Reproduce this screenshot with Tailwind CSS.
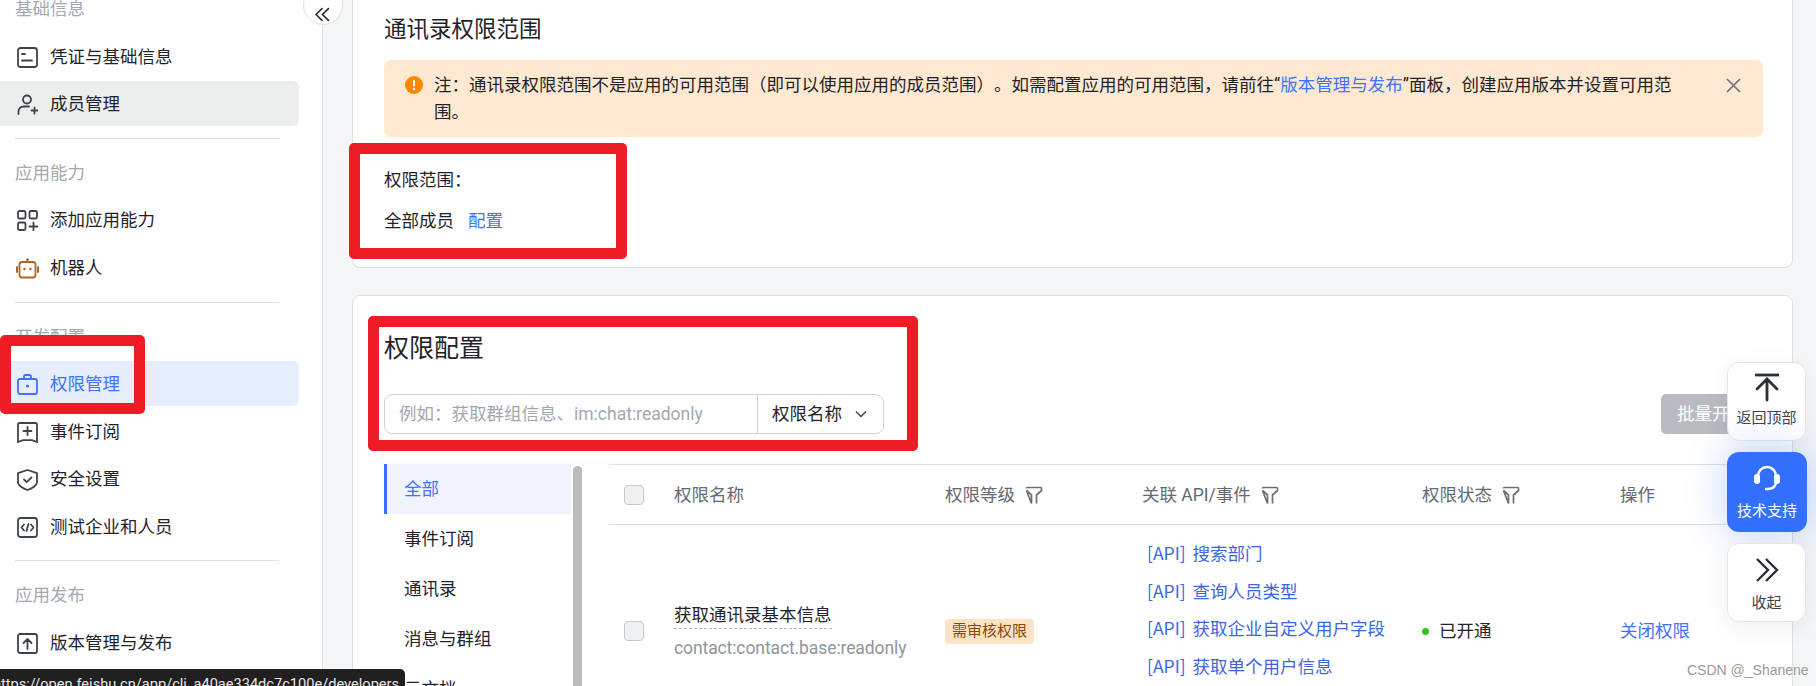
<!DOCTYPE html>
<html lang="zh-CN">
<head>
<meta charset="utf-8">
<title>权限管理</title>
<script src="https://cdn.jsdelivr.net/npm/@tailwindcss/browser@4"></script>
</head>
<body class="m-0">
<div class="relative flex h-[686px] w-[1816px] overflow-hidden bg-[#f5f6f7] font-['Roboto','Noto_Sans_CJK_SC',sans-serif] [text-spacing-trim:space-all] text-[17.5px] leading-[27px] text-[#1f2329]">

  <!-- sidebar -->
  <aside class="relative w-[323px] shrink-0 border-r border-[#dee0e3] bg-white">
    <div class="-mt-[7px] mb-[7.5px] flex h-[33px] items-center pl-[15px] text-[#a3a8af]">基础信息</div>
    <div class="flex flex-col gap-[2.5px] pr-[23px]">
      <a class="flex h-[45px] items-center gap-[12px] rounded-r-[6px] pl-[17px] pt-[2px]">
        <svg class="w-[21px] h-[21px]" viewBox="0 0 21 21" fill="none" stroke="#3f444c" stroke-width="1.8"><rect x="1" y="1" width="19" height="19" rx="2.5"/><path d="M5 7h3M5 13.5h10" stroke-linecap="round"/></svg>
        <span>凭证与基础信息</span>
      </a>
      <a class="flex h-[45px] items-center gap-[12px] rounded-r-[6px] bg-[#eceeee] pl-[17px] pt-[2px]">
        <svg class="w-[21px] h-[21px]" viewBox="0 0 21 21" fill="none" stroke="#3f444c" stroke-width="1.8" stroke-linecap="round"><circle cx="10" cy="5.5" r="4"/><path d="M1.5 20v-2.5a5 5 0 0 1 5-5H12M14.5 16.5h6M17.5 13.5v6"/></svg>
        <span>成员管理</span>
      </a>
    </div>
    <div class="ml-[15px] mt-[12px] h-px w-[264px] bg-[#dee0e3]"></div>
    <div class="flex h-[58.5px] items-center pl-[15px] pt-[10px] text-[#a3a8af]">应用能力</div>
    <div class="flex flex-col gap-[2.5px] pr-[23px]">
      <a class="flex h-[45px] items-center gap-[12px] pl-[17px] pt-[1px]">
        <svg class="w-[21px] h-[21px]" viewBox="0 0 21 21" fill="none" stroke="#3f444c" stroke-width="1.8" stroke-linecap="round"><rect x="1" y="1" width="7.5" height="7.5" rx="1.5"/><rect x="12.5" y="1" width="7.5" height="7.5" rx="1.5"/><rect x="1" y="12.5" width="7.5" height="7.5" rx="1.5"/><path d="M12.5 16.5h8M16.5 12.5v8"/></svg>
        <span>添加应用能力</span>
      </a>
      <a class="flex h-[45px] items-center gap-[11px] pl-[16px] pt-[1px]">
        <svg class="w-[23px] h-[21px]" viewBox="0 0 23 21" fill="none" stroke="#b5651d" stroke-width="1.8"><rect x="3.5" y="4" width="16" height="15.5" rx="2.5"/><path d="M11.5 1v3"/><circle cx="11.5" cy="1.5" r="1.2" fill="#b5651d" stroke="none"/><path d="M1 9v5M22 9v5" stroke-linecap="round" stroke-width="2"/><circle cx="8.5" cy="11" r="1.2" fill="#b5651d" stroke="none"/><circle cx="14.5" cy="11" r="1.2" fill="#b5651d" stroke="none"/></svg>
        <span>机器人</span>
      </a>
    </div>
    <div class="ml-[15px] mt-[12px] h-px w-[264px] bg-[#dee0e3]"></div>
    <div class="flex h-[58px] items-center pl-[15px] pt-[10px] text-[#a3a8af]">开发配置</div>
    <div class="flex flex-col gap-[2.5px] pr-[23px]">
      <a class="flex h-[45px] items-center gap-[12px] rounded-r-[6px] bg-[#e6edfd] pl-[17px] pt-[2px] text-[#3f72ff]">
        <svg class="w-[21px] h-[21px]" viewBox="0 0 21 21" fill="none" stroke="#3f72ff" stroke-width="1.8"><rect x="1" y="5" width="19" height="15" rx="2"/><path d="M7 5V2.5A1.5 1.5 0 0 1 8.5 1h4A1.5 1.5 0 0 1 14 2.5V5"/><circle cx="10.5" cy="12" r="1.6" fill="#3f72ff" stroke="none"/></svg>
        <span>权限管理</span>
      </a>
      <a class="flex h-[45px] items-center gap-[12px] pl-[17px] pt-[2px]">
        <svg class="w-[21px] h-[21px]" viewBox="0 0 21 21" fill="none" stroke="#3f444c" stroke-width="1.8" stroke-linecap="round"><path d="M1 2.5A1.5 1.5 0 0 1 2.5 1h16A1.5 1.5 0 0 1 20 2.5V20l-5-1.8H6L1 20z"/><path d="M6.5 9h8M10.5 5v8"/></svg>
        <span>事件订阅</span>
      </a>
      <a class="flex h-[45px] items-center gap-[12px] pl-[17px] pt-[2px]">
        <svg class="w-[21px] h-[22px]" viewBox="0 0 21 22" fill="none" stroke="#3f444c" stroke-width="1.8" stroke-linecap="round" stroke-linejoin="round"><path d="M10.5 1 20 4.2v9.3c0 2.600-5 6-9.500 7.500C6 19.500 1 16.100 1 13.500V4.200z"/><path d="m7 10.500 2.700 2.700L14.500 8.500"/></svg>
        <span>安全设置</span>
      </a>
      <a class="flex h-[45px] items-center gap-[12px] pl-[17px] pt-[2px]">
        <svg class="w-[21px] h-[21px]" viewBox="0 0 21 21" fill="none" stroke="#3f444c" stroke-width="1.8" stroke-linecap="round" stroke-linejoin="round"><rect x="1" y="1" width="19" height="19" rx="2.500"/><path d="M7 7.500 4.500 10.500 7 13.500M14 7.500l2.500 3-2.500 3M11.500 7l-2 7"/></svg>
        <span>测试企业和人员</span>
      </a>
    </div>
    <div class="ml-[15px] mt-[11px] h-px w-[264px] bg-[#dee0e3]"></div>
    <div class="flex h-[59px] items-center pl-[15px] pt-[10px] text-[#a3a8af]">应用发布</div>
    <div class="pr-[23px]">
      <a class="flex h-[45px] items-center gap-[12px] pl-[17px] pt-[2px]">
        <svg class="w-[21px] h-[21px]" viewBox="0 0 21 21" fill="none" stroke="#3f444c" stroke-width="1.8" stroke-linecap="round" stroke-linejoin="round"><rect x="1" y="1" width="19" height="19" rx="2"/><path d="M10.500 16V6.500M6.500 10l4-4 4 4"/></svg>
        <span>版本管理与发布</span>
      </a>
    </div>
  </aside>

  <!-- main -->
  <main class="min-w-0 flex-1 pl-[29px] pr-[23px]">
    <section class="-mt-[20px] h-[288px] rounded-[8px] border border-[#dee0e3] bg-white pl-[31px] pr-[29px] pt-[33px]">
      <h2 class="text-[22.5px] leading-[30px] font-normal text-[#1f2329]">通讯录权限范围</h2>
      <div class="mt-[16px] flex h-[77px] rounded-[7px] bg-[#fde8d1] pl-[21px] pr-[22px] pt-[12px]">
        <svg class="mt-[4px] h-[18px] w-[18px] shrink-0" viewBox="0 0 18 18"><circle cx="9" cy="9" r="9" fill="#ff8800"/><rect x="8" y="4" width="2" height="6.500" rx="1" fill="#fff"/><circle cx="9" cy="13" r="1.200" fill="#fff"/></svg>
        <p class="ml-[11px] flex-1 text-[17.5px] leading-[27px]">注：通讯录权限范围不是应用的可用范围（即可以使用应用的成员范围）。如需配置应用的可用范围，请前往“<span class="text-[#3f72ff]">版本管理与发布</span>”面板，创建应用版本并设置可用范<br>围。</p>
        <svg class="mt-[6px] h-[15px] w-[15px] shrink-0" viewBox="0 0 15 15" fill="none" stroke="#6b7078" stroke-width="1.600"><path d="m1 1 13 13M14 1 1 14"/></svg>
      </div>
      <div class="mt-[30px]">权限范围：</div>
      <div class="mt-[14px] flex gap-[14px]"><span>全部成员</span><a class="text-[#3f72ff]">配置</a></div>
    </section>

    <section class="mt-[27px] h-[500px] rounded-[8px] border border-[#dee0e3] bg-white pl-[31px] pr-[29px] pt-[36px]">
      <h2 class="text-[25px] leading-[34px] font-normal">权限配置</h2>
      <div class="mt-[28px] flex h-[40px] items-center justify-between">
        <div class="flex h-[40px] w-[500px] rounded-[8px] border border-[#d0d3d6]">
          <div class="flex w-[373px] items-center border-r border-[#d0d3d6] pl-[14px] text-[#a3a8af]">例如：获取群组信息、im:chat:readonly</div>
          <div class="flex flex-1 items-center pl-[14px]">
            <span>权限名称</span>
            <svg class="ml-[13px] h-[8px] w-[12px]" viewBox="0 0 12 8" fill="none" stroke="#3f444c" stroke-width="1.500"><path d="m1 1.500 5 5 5-5"/></svg>
          </div>
        </div>
        <button class="flex h-[40px] w-[102px] items-center justify-center rounded-[5px] bg-[#b8bbbf] text-white">批量开通</button>
      </div>

      <div class="mt-[30px] flex">
        <div class="relative w-[198px] shrink-0">
          <div class="w-[187px]">
            <div class="flex h-[50px] items-center border-l-[3px] border-[#3370ff] bg-[#f0f4ff] pl-[17px] text-[#3f72ff]">全部</div>
            <div class="flex h-[50px] items-center pl-[20px]">事件订阅</div>
            <div class="flex h-[50px] items-center pl-[20px]">通讯录</div>
            <div class="flex h-[50px] items-center pl-[20px]">消息与群组</div>
            <div class="flex h-[50px] items-center pl-[20px]">云文档</div>
          </div>
          <div class="absolute right-0 top-[2px] h-[400px] w-[9px] rounded-full bg-[#bbbbbb]"></div>
        </div>
        <div class="ml-[27px] flex-1">
          <div class="grid h-[61px] grid-cols-[65px_271px_197px_280px_198px_1fr] items-center border-y border-[#dee0e3] text-[#646a73]">
            <span class="ml-[15px] h-[20px] w-[20px] rounded-[4px] border border-[#c4c7cc] bg-[#eff0f1]"></span>
            <span class="pt-[2px]">权限名称</span>
            <span class="flex items-center gap-[10px] pt-[2px]">权限等级
              <svg class="h-[19px] w-[18px]" viewBox="0 0 18 19" fill="none" stroke="#6b7078" stroke-width="1.700"><path d="M1.500 2.500a1 1 0 0 1 1-1h13a1 1 0 0 1 1 1v2L11.500 9v8.500M6.500 17.500V9l-5-4.500z"/></svg></span>
            <span class="flex items-center gap-[10px] pt-[2px]">关联 API/事件
              <svg class="h-[19px] w-[18px]" viewBox="0 0 18 19" fill="none" stroke="#6b7078" stroke-width="1.700"><path d="M1.500 2.500a1 1 0 0 1 1-1h13a1 1 0 0 1 1 1v2L11.500 9v8.500M6.500 17.500V9l-5-4.500z"/></svg></span>
            <span class="flex items-center gap-[10px] pt-[2px]">权限状态
              <svg class="h-[19px] w-[18px]" viewBox="0 0 18 19" fill="none" stroke="#6b7078" stroke-width="1.700"><path d="M1.500 2.500a1 1 0 0 1 1-1h13a1 1 0 0 1 1 1v2L11.500 9v8.500M6.500 17.500V9l-5-4.500z"/></svg></span>
            <span class="pt-[2px]">操作</span>
          </div>
          <div class="grid h-[212px] grid-cols-[65px_271px_197px_280px_198px_1fr] items-center">
            <span class="ml-[15px] h-[20px] w-[20px] rounded-[4px] border border-[#c4c7cc] bg-[#eff0f1]"></span>
            <div>
              <div class="w-fit border-b border-dashed border-[#b8bbbf] leading-[26px]">获取通讯录基本信息</div>
              <div class="mt-[6px] leading-[26px] tracking-[-0.1px] text-[#8f959e]">contact:contact.base:readonly</div>
            </div>
            <span class="flex h-[25px] w-[89px] items-center justify-center rounded-[4px] bg-[#fde2c4] text-[15px] text-[#86460a]">需审核权限</span>
            <div class="flex flex-col self-start pl-[5px] pt-[9px] font-['Noto_Sans_CJK_SC',sans-serif] text-[#3f66e0] [word-spacing:3px]">
              <a class="flex h-[37.5px] items-center">[API] 搜索部门</a>
              <a class="flex h-[37.5px] items-center">[API] 查询人员类型</a>
              <a class="flex h-[37.5px] items-center">[API] 获取企业自定义用户字段</a>
              <a class="flex h-[37.5px] items-center">[API] 获取单个用户信息</a>
            </div>
            <span class="flex items-center gap-[10px]"><i class="h-[7px] w-[7px] rounded-full bg-[#34c724]"></i>已开通</span>
            <a class="text-[#3f72ff]">关闭权限</a>
          </div>
        </div>
      </div>
    </section>
  </main>

  <!-- collapse toggle -->
  <button class="absolute left-[303px] top-[-15px] flex h-[40px] w-[40px] items-center justify-center rounded-full border border-[#dee0e3] bg-white pr-[2px] pt-[18px]" aria-label="收起侧栏">
    <svg class="h-[15px] w-[15px]" viewBox="0 0 14 14" fill="none" stroke="#2b2f36" stroke-width="1.500"><path d="M7 1 1 7l6 6M13 1 7 7l6 6"/></svg>
  </button>

  <!-- floating tools -->
  <div class="absolute left-[1727px] top-[362px] flex w-[80px] flex-col gap-[11px] text-[15px] leading-[20px]">
    <div class="flex h-[79px] w-[79px] flex-col items-center rounded-[12px] border border-[#e4e6e8] bg-white pt-[10px] text-[#3f444c] shadow-[0_4px_24px_rgba(31,35,41,0.06)]">
      <svg class="h-[30px] w-[28px]" viewBox="0 0 28 30" fill="none" stroke="#2b2f36" stroke-width="2.800" stroke-linecap="round"><path d="M2 2h24" stroke-linecap="butt"/><path d="M14 27V6M4 16 14 6l10 10"/></svg>
      <span class="mt-[5px]">返回顶部</span>
    </div>
    <div class="flex h-[80px] w-[80px] flex-col items-center rounded-[12px] bg-[#3370ff] pt-[12px] text-white shadow-[0_0_40px_rgba(51,112,255,0.32)]">
      <svg class="h-[28px] w-[28px]" viewBox="0 0 28 28" fill="none" stroke="#fff" stroke-width="2.400" stroke-linecap="round"><path d="M5 13v-1a9 9 0 0 1 18 0v5c0 5-3 8-8 8h-2"/><rect x="1" y="10" width="6" height="10" rx="3" fill="#fff" stroke="none"/><rect x="21" y="10" width="6" height="10" rx="3" fill="#fff" stroke="none"/></svg>
      <span class="mt-[9px]">技术支持</span>
    </div>
    <div class="flex h-[79px] w-[79px] flex-col items-center rounded-[12px] border border-[#e4e6e8] bg-white pt-[14px] text-[#3f444c] shadow-[0_4px_24px_rgba(31,35,41,0.08)]">
      <svg class="h-[24px] w-[24px]" viewBox="0 0 24 24" fill="none" stroke="#2b2f36" stroke-width="2.400"><path d="m2 1 11 11L2 23M11 1l11 11-11 11"/></svg>
      <span class="mt-[11px]">收起</span>
    </div>
  </div>

  <!-- annotations -->
  <div class="pointer-events-none absolute left-[349px] top-[143px] h-[116px] w-[278px] rounded-[5px] border-[11px] border-[#ee1c25]"></div>
  <div class="pointer-events-none absolute left-[368px] top-[316px] h-[135px] w-[550px] rounded-[5px] border-[11px] border-[#ee1c25]"></div>
  <div class="pointer-events-none absolute left-0 top-[335px] h-[79px] w-[145px] rounded-[5px] border-[11px] border-[#ee1c25]"></div>

  <!-- status tooltip -->
  <div class="absolute bottom-0 left-0 h-[17px] w-[405px] overflow-hidden rounded-tr-[5px] bg-[#202020] pl-[1px] pt-[5px]">
    <div class="-ml-[8px] whitespace-nowrap font-['Roboto',sans-serif] text-[14.6px] leading-[20px] text-[#e8e8e8]">https://open.feishu.cn/app/cli_a40ae334dc7c100e/developers</div>
  </div>

  <!-- watermark -->
  <div class="absolute left-[1687px] top-[661px] whitespace-nowrap font-['Liberation_Sans',sans-serif] text-[14px] leading-[18px] text-[#9a9a9a]">CSDN @_Shanene</div>
</div>
</body>
</html>
